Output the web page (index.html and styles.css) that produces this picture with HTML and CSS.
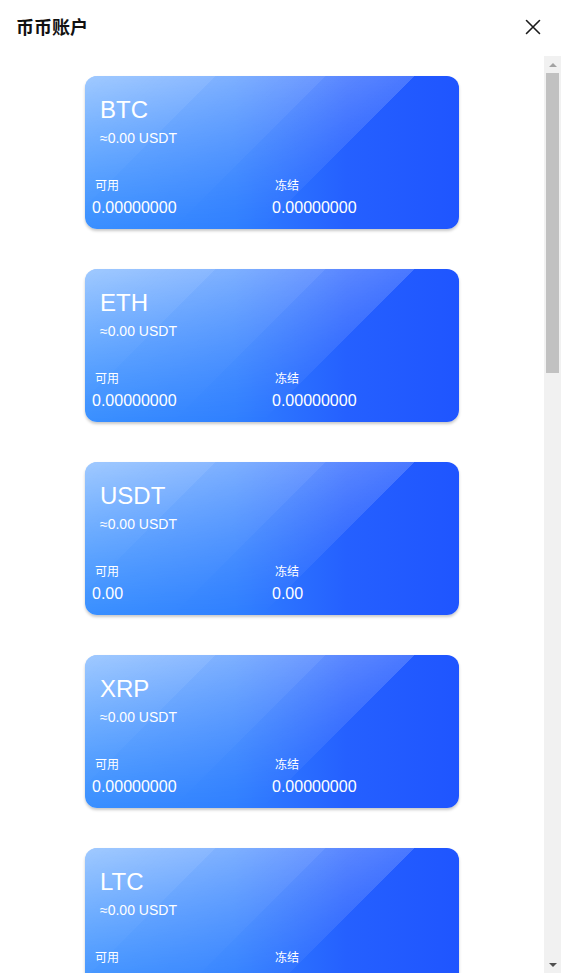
FILE: index.html
```html
<!DOCTYPE html>
<html lang="zh-CN">
<head>
<meta charset="utf-8">
<title>币币账户</title>
<link rel="stylesheet" href="styles.css">
</head>
<body>
<div class="page">
  <header class="header">
    <h1 class="title">币币账户</h1>
    <button class="close" aria-label="关闭">
      <svg width="16" height="16" viewBox="0 0 16 16"><path d="M1.5 1.5 L14.5 14.5 M14.5 1.5 L1.5 14.5" stroke="#1c1c1c" stroke-width="1.6" fill="none" stroke-linecap="round"/></svg>
    </button>
  </header>
  <div class="body">
    <main class="list">
      <section class="card">
        <div class="card-top">
          <div class="coin">BTC</div>
          <div class="approx">≈0.00 USDT</div>
        </div>
        <div class="card-bottom">
          <div class="col"><div class="label">可用</div><div class="value">0.00000000</div></div>
          <div class="col"><div class="label">冻结</div><div class="value">0.00000000</div></div>
        </div>
      </section>
      <section class="card">
        <div class="card-top">
          <div class="coin">ETH</div>
          <div class="approx">≈0.00 USDT</div>
        </div>
        <div class="card-bottom">
          <div class="col"><div class="label">可用</div><div class="value">0.00000000</div></div>
          <div class="col"><div class="label">冻结</div><div class="value">0.00000000</div></div>
        </div>
      </section>
      <section class="card">
        <div class="card-top">
          <div class="coin">USDT</div>
          <div class="approx">≈0.00 USDT</div>
        </div>
        <div class="card-bottom">
          <div class="col"><div class="label">可用</div><div class="value">0.00</div></div>
          <div class="col"><div class="label">冻结</div><div class="value">0.00</div></div>
        </div>
      </section>
      <section class="card">
        <div class="card-top">
          <div class="coin">XRP</div>
          <div class="approx">≈0.00 USDT</div>
        </div>
        <div class="card-bottom">
          <div class="col"><div class="label">可用</div><div class="value">0.00000000</div></div>
          <div class="col"><div class="label">冻结</div><div class="value">0.00000000</div></div>
        </div>
      </section>
      <section class="card">
        <div class="card-top">
          <div class="coin">LTC</div>
          <div class="approx">≈0.00 USDT</div>
        </div>
        <div class="card-bottom">
          <div class="col"><div class="label">可用</div><div class="value">0.00000000</div></div>
          <div class="col"><div class="label">冻结</div><div class="value">0.00000000</div></div>
        </div>
      </section>
      <section class="card">
        <div class="card-top">
          <div class="coin">EOS</div>
          <div class="approx">≈0.00 USDT</div>
        </div>
        <div class="card-bottom">
          <div class="col"><div class="label">可用</div><div class="value">0.00000000</div></div>
          <div class="col"><div class="label">冻结</div><div class="value">0.00000000</div></div>
        </div>
      </section>
    </main>
    <div class="scrollbar" aria-hidden="true">
      <div class="sb-btn"><span class="arrow-up"></span></div>
      <div class="sb-track"><div class="sb-thumb"></div></div>
      <div class="sb-btn"><span class="arrow-down"></span></div>
    </div>
  </div>
</div>
</body>
</html>
```
FILE: styles.css
```css
* { box-sizing: border-box; }
html, body { margin: 0; padding: 0; background: #fff; }
body {
  font-family: "Liberation Sans", Arial, "Noto Sans CJK SC", sans-serif;
  color: #111;
}
.page {
  width: 561px;
  height: 973px;
  display: flex;
  flex-direction: column;
  overflow: hidden;
}
.header {
  height: 56px;
  flex: 0 0 56px;
  display: flex;
  align-items: center;
  justify-content: space-between;
  padding: 0 20px 0 16px;
}
.title {
  margin: 0;
  font-size: 18px;
  font-weight: bold;
  line-height: 24px;
  color: #111;
  font-family: "Liberation Sans", "Noto Sans CJK SC", sans-serif;
}
.close {
  border: 0;
  background: transparent;
  padding: 0;
  width: 16px;
  height: 16px;
  display: flex;
  cursor: pointer;
  margin-top: -2px;
}
.body {
  flex: 1;
  display: flex;
  min-height: 0;
}
.list {
  flex: 1;
  overflow: hidden;
  display: flex;
  flex-direction: column;
  align-items: center;
  gap: 40px;
  padding-top: 20px;
}
.card {
  position: relative;
  flex: 0 0 153px;
  width: 374px;
  height: 153px;
  border-radius: 12px;
  overflow: hidden;
  color: #fff;
  display: flex;
  flex-direction: column;
  box-shadow: 0 2px 3px rgba(0, 0, 0, 0.22);
  background: linear-gradient(to right, #3a90ff 0%, #3080ff 40%, #2560ff 70%, #1f55ff 100%);
}
.card::before {
  content: "";
  position: absolute;
  inset: 0;
  pointer-events: none;
  background: linear-gradient(135deg,
      rgba(255,255,255,0.52) 0px,
      rgba(255,255,255,0.44) 92px,
      rgba(255,255,255,0.39) 92px,
      rgba(255,255,255,0.32) 170px,
      rgba(255,255,255,0.27) 170px,
      rgba(255,255,255,0.19) 233px,
      rgba(255,255,255,0) 233px);
  -webkit-mask-image: linear-gradient(to bottom, #000 0%, rgba(0,0,0,0.55) 45%, rgba(0,0,0,0) 100%);
  mask-image: linear-gradient(to bottom, #000 0%, rgba(0,0,0,0.55) 45%, rgba(0,0,0,0) 100%);
}
.card-top,
.card-bottom {
  position: relative;
}
.card-top {
  padding: 22px 15px 0 15px;
}
.coin {
  font-size: 24px;
  line-height: 24px;
}
.approx {
  font-size: 14px;
  line-height: 14px;
  margin-top: 9px;
}
.card-bottom {
  margin-top: auto;
  padding: 0 7px 13px 7px;
  display: flex;
}
.col {
  flex: 1;
}
.label {
  font-size: 12px;
  line-height: 12px;
  padding-left: 3px;
  font-family: "Liberation Sans", "Noto Sans CJK SC", sans-serif;
}
.value {
  font-size: 16px;
  line-height: 16px;
  margin-top: 8px;
}
.scrollbar {
  width: 17px;
  flex: 0 0 17px;
  background: #f1f1f1;
  display: flex;
  flex-direction: column;
}
.sb-btn {
  height: 17px;
  flex: 0 0 17px;
  display: flex;
  align-items: center;
  justify-content: center;
}
.sb-track {
  flex: 1;
  padding: 0 2px;
}
.sb-thumb {
  height: 300px;
  background: #c1c1c1;
}
.arrow-up {
  width: 0;
  height: 0;
  border-left: 4px solid transparent;
  border-right: 4px solid transparent;
  border-bottom: 4px solid #a3a3a3;
}
.arrow-down {
  width: 0;
  height: 0;
  border-left: 4px solid transparent;
  border-right: 4px solid transparent;
  border-top: 4px solid #505050;
}
```
